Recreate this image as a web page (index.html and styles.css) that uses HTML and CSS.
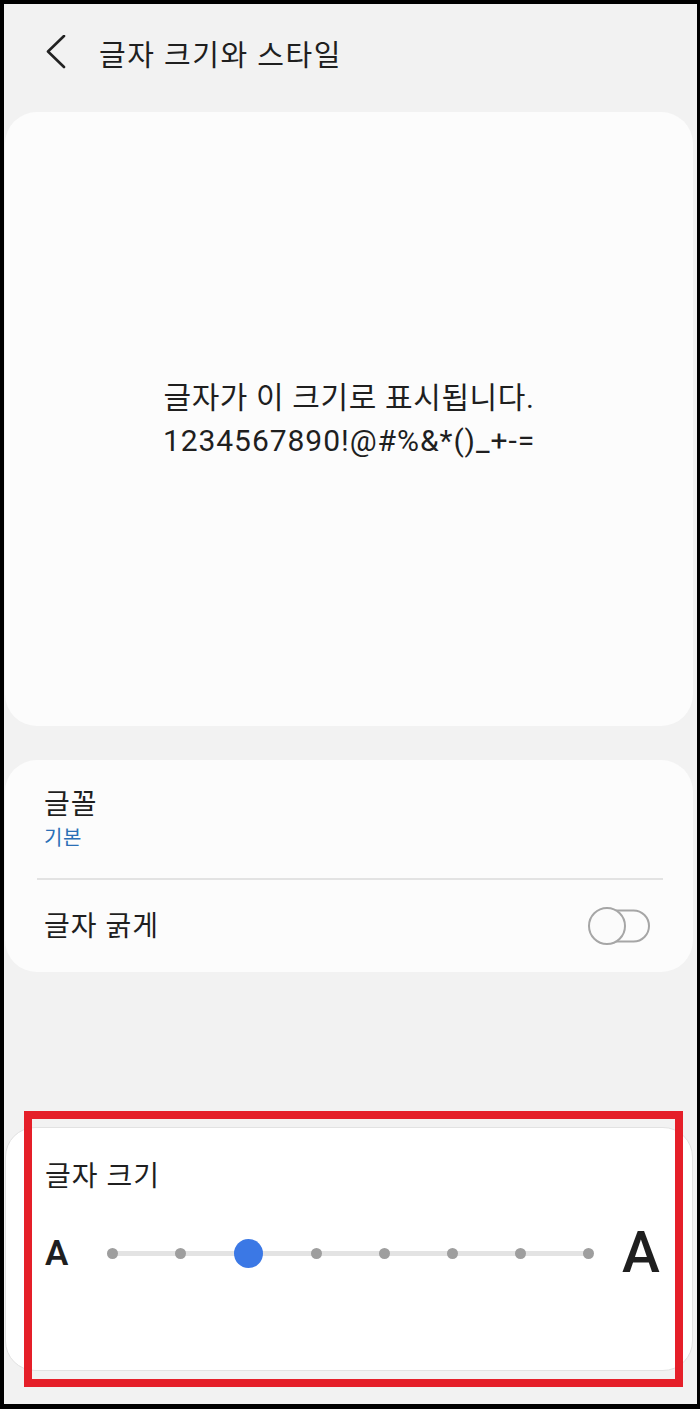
FILE: index.html
```html
<!DOCTYPE html>
<html lang="ko">
<head>
    <meta charset="UTF-8">
    <meta name="viewport" content="width=device-width, initial-scale=1.0">
    <title>글자 크기와 스타일</title>
    <link rel="stylesheet" href="styles.css">
</head>
<body>
    <div class="ekran">
        <header class="naglowek">
            <svg class="wstecz" width="24" height="36" viewBox="0 0 24 36">
                <path d="M20 1 L4 16.5 L20 32" fill="none" stroke="#222" stroke-width="2.6" stroke-linecap="round" stroke-linejoin="round"/>
            </svg>
            <h1>글자 크기와 스타일</h1>
        </header>

        <section class="karta podglad">
            <p class="podglad-ko">글자가 이 크기로 표시됩니다.</p>
            <p class="podglad-en">1234567890!@#%&amp;*()_+-=</p>
        </section>

        <section class="karta ustawienia">
            <div class="wiersz wiersz-glowny">
                <div class="tytul">글꼴</div>
                <div class="podtytul">기본</div>
            </div>
            <div class="separator"></div>
            <div class="wiersz wiersz-przelacznik">
                <div class="tytul">글자 굵게</div>
                <svg class="przelacznik" width="64" height="40" viewBox="0 0 64 40">
                    <rect x="8" y="4.5" width="54" height="31" rx="15.5" fill="#fcfcfc" stroke="#a6a6a6" stroke-width="2"/>
                    <circle cx="20" cy="20" r="18" fill="#fbfbfb" stroke="#a6a6a6" stroke-width="2"/>
                </svg>
            </div>
        </section>

        <section class="karta rozmiar">
            <div class="tytul">글자 크기</div>
            <div class="suwak-wiersz">
                <span class="litera-mala">A</span>
                <div class="suwak">
                    <span class="kropka"></span>
                    <span class="kropka"></span>
                    <span class="kropka aktywna"></span>
                    <span class="kropka"></span>
                    <span class="kropka"></span>
                    <span class="kropka"></span>
                    <span class="kropka"></span>
                    <span class="kropka"></span>
                </div>
                <span class="litera-duza">A</span>
            </div>
        </section>

        <div class="ramka"></div>
    </div>
</body>
</html>
```

FILE: styles.css
```css
body {
    margin: 0;
    background-color: #000;
    font-family: Roboto, "Noto Sans CJK KR", sans-serif;
    color: #1f1f1f;
}
.ekran {
    position: relative;
    margin: 4px 3px 5px 4px;
    height: 1400px;
    background-color: #f2f2f2;
    overflow: hidden;
}
.naglowek {
    height: 98px;
    display: flex;
    align-items: center;
    padding-left: 40px;
    gap: 31px;
}
.naglowek h1 {
    margin: 0;
    font-size: 29px;
    font-weight: 400;
    letter-spacing: 1.5px;
}
.karta {
    background-color: #fcfcfc;
    border-radius: 32px;
    margin: 0 4px 0 1px;
}
.podglad {
    margin-top: 10px;
    height: 614px;
    display: flex;
    flex-direction: column;
    justify-content: center;
    align-items: center;
}
.podglad p {
    margin: 0;
}
.podglad-ko {
    font-size: 30px;
    line-height: 43px;
    letter-spacing: 0.6px;
}
.podglad-en {
    font-size: 30px;
    line-height: 43px;
    letter-spacing: 0.95px;
}
.ustawienia {
    margin-top: 34px;
}
.wiersz {
    padding: 0 43px 0 39px;
}
.wiersz-glowny {
    height: 118px;
    display: flex;
    flex-direction: column;
    justify-content: center;
}
.tytul {
    font-size: 28px;
    line-height: 33px;
    letter-spacing: 1px;
}
.podtytul {
    margin-top: 5px;
    font-size: 20px;
    line-height: 25px;
    letter-spacing: 0.5px;
    color: #2a6fb6;
}
.separator {
    height: 2px;
    background-color: #e3e3e3;
    margin: 0 30px 0 32px;
}
.wiersz-przelacznik {
    height: 92px;
    display: flex;
    align-items: center;
    justify-content: space-between;
}
.przelacznik {
    margin-right: -1px;
}
.rozmiar {
    margin-top: 155px;
    background-color: #fff;
    border: 1px solid #e2e2e2;
    border-radius: 30px;
    padding: 32px 0 0 39px;
    box-sizing: content-box;
    height: 210px;
}
.suwak-wiersz {
    display: flex;
    align-items: center;
    height: 56px;
    margin-top: 32px;
}
.litera-mala {
    width: 33px;
    font-size: 35px;
    font-weight: 600;
}
.suwak {
    width: 544px;
    height: 30px;
    display: grid;
    grid-template-columns: repeat(8, 1fr);
    align-items: center;
    justify-items: center;
    background: linear-gradient(#e3e3e3, #e3e3e3) no-repeat center / calc(100% - 68px) 5px;
}
.kropka {
    width: 11px;
    height: 11px;
    border-radius: 50%;
    background-color: #9e9e9e;
}
.kropka.aktywna {
    width: 29px;
    height: 29px;
    background-color: #3b78e5;
}
.litera-duza {
    font-size: 57px;
    font-weight: 500;
    line-height: 56px;
}
.ramka {
    position: absolute;
    left: 20px;
    top: 1107px;
    width: 643px;
    height: 260px;
    border: 8px solid #e51f29;
}
```
